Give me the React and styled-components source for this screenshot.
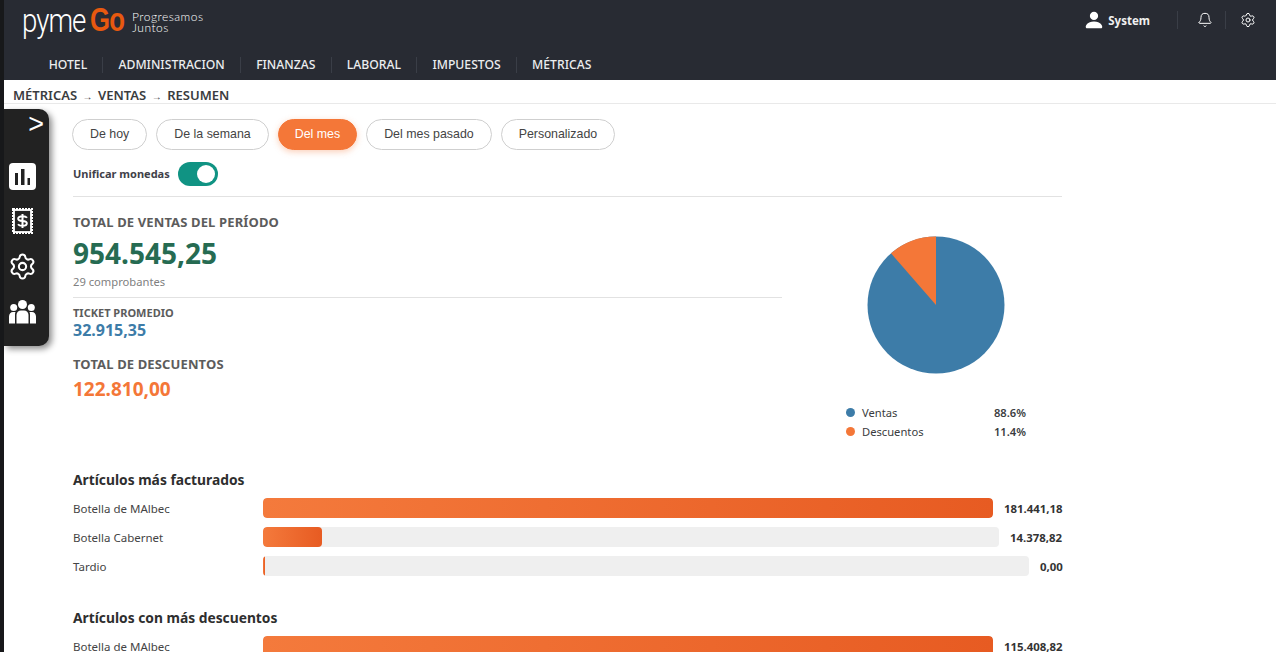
import React from "react";
import styled, { createGlobalStyle } from "styled-components";
import { Bell, Settings } from "lucide-react";
import { BsPersonFill } from "react-icons/bs";

const UI_FONT = `"Noto Sans", "Open Sans", sans-serif`;

const GlobalStyle = createGlobalStyle`
  html, body {
    margin: 0;
    padding: 0;
    height: 100%;
    overflow: hidden;
    background: #fff;
    font-family: ${UI_FONT};
  }
  * { box-sizing: border-box; }
`;

const Page = styled.div`
  position: relative;
  height: 652px;
  overflow: hidden;
  border-left: 4px solid #17181a;
`;

const Header = styled.header`
  height: 80px;
  background: #282b33;
  color: #fff;
`;

const TopRow = styled.div`
  height: 44px;
  display: flex;
  align-items: center;
  justify-content: space-between;
  padding: 0 7px 0 18px;
`;

const Logo = styled.div`
  display: flex;
  align-items: center;
  height: 44px;
  margin-top: -4px;
`;

const LogoPyme = styled.span`
  font-family: "Roboto", sans-serif;
  font-weight: 300;
  font-size: 33px;
  letter-spacing: -1.2px;
  transform: scaleX(0.84);
  transform-origin: left;
  width: 68px;
`;

const LogoGo = styled.span`
  font-family: "Liberation Sans", sans-serif;
  font-weight: 700;
  font-size: 33px;
  letter-spacing: -1px;
  color: #e8590f;
  transform: scaleX(0.78);
  transform-origin: left;
  width: 42px;
`;

const LogoSlogan = styled.div`
  font-family: "Lato", sans-serif;
  font-size: 12px;
  line-height: 11px;
  letter-spacing: 0.5px;
  font-weight: 300;
  margin-top: 3px;
`;

const UserArea = styled.div`
  display: flex;
  align-items: center;
  margin-top: -4px;
`;

const UserName = styled.span`
  font-size: 11.5px;
  font-weight: 700;
  margin: 0 27px 0 3px;
  color: #f0f0f0;
`;

const IconCell = styled.div`
  display: flex;
  align-items: center;
  justify-content: center;
  height: 18px;
  width: ${(p) => p.$w}px;
  padding-left: ${(p) => p.$pl || 0}px;
  border-left: 1px solid #3a3e47;
`;

const Nav = styled.nav`
  height: 36px;
  display: flex;
  align-items: center;
  padding: 6px 0 0 29.5px;
`;

const NavItem = styled.a`
  font-size: 12.2px;
  font-weight: 500;
  color: #eceef0;
  padding: 0 15.2px;
  line-height: 16px;
  white-space: nowrap;
  & + & {
    border-left: 1px solid #3a3e47;
  }
`;

const Breadcrumb = styled.div`
  height: 24px;
  padding: 8px 0 0 9px;
  font-size: 13px;
  font-weight: 600;
  line-height: 15px;
  color: #3a3c40;
  border-bottom: 1px solid #e9e9e9;
  white-space: nowrap;
`;

const Crumb = styled.span`
  font-weight: 400;
  font-size: 10px;
  margin: 0 5.5px;
`;

const Sidebar = styled.aside`
  position: absolute;
  left: 0;
  top: 109px;
  width: 45px;
  height: 237px;
  padding-right: 8px;
  background: #222222;
  border-radius: 0 10px 10px 0;
  box-shadow: 3px 3px 6px rgba(0, 0, 0, 0.45);
  display: flex;
  flex-direction: column;
  align-items: center;
  color: #fff;
`;

const Toggle = styled.div`
  align-self: flex-end;
  font-family: "Liberation Sans", sans-serif;
  font-size: 27px;
  line-height: 24px;
  height: 24px;
  margin: 3px -3px 0 0;
`;

const SideActive = styled.div`
  width: 27px;
  height: 27px;
  margin-top: 27px;
  border-radius: 4px;
  background: #fff;
  display: flex;
  align-items: center;
  justify-content: center;
`;

const SideIcon = styled.div`
  height: 26px;
  margin-top: ${(p) => p.$mt}px;
  display: flex;
  align-items: center;
  justify-content: center;
`;

const Content = styled.main`
  width: 989px;
  margin-left: 69px;
`;

const Pills = styled.div`
  display: flex;
  gap: 9px;
  padding-top: 15px;
  margin-left: -1px;
`;

const Pill = styled.button`
  height: 31px;
  padding: 0 ${(p) => (p.$active ? 16 : 17)}px 2px;
  border-radius: 16px;
  border: 1px solid ${(p) => (p.$active ? "#f47738" : "#cfcfcf")};
  background: ${(p) => (p.$active ? "#f47738" : "#fff")};
  color: ${(p) => (p.$active ? "#fff" : "#444")};
  font-family: "Liberation Sans", sans-serif;
  font-size: 12.4px;
  box-shadow: ${(p) => (p.$active ? "0 2px 6px rgba(244,119,56,0.35)" : "none")};
`;

const SwitchRow = styled.div`
  display: flex;
  align-items: center;
  gap: 8px;
  height: 24px;
  margin-top: 12px;
`;

const SwitchLabel = styled.label`
  font-size: 11px;
  font-weight: 700;
  color: #3f4149;
  margin-top: -2px;
`;

const Switch = styled.div`
  position: relative;
  width: 40px;
  height: 24px;
  border-radius: 12px;
  background: #109383;
  &::after {
    content: "";
    position: absolute;
    right: 3px;
    top: 3px;
    width: 18px;
    height: 18px;
    border-radius: 50%;
    background: #fff;
  }
`;

const Divider = styled.hr`
  border: 0;
  border-top: 1px solid #e2e2e2;
  margin: ${(p) => p.$m || 0};
`;

const Summary = styled.section`
  display: grid;
  grid-template-columns: 709px 1fr;
`;

const StatTitle = styled.div`
  font-size: 13px;
  letter-spacing: 0.13px;
  font-weight: 700;
  line-height: 16px;
  color: #5c5c5c;
  margin-top: ${(p) => p.$mt || 0}px;
`;

const BigValue = styled.div`
  font-size: 28px;
  font-weight: 700;
  line-height: 38px;
  color: #266b52;
  margin-top: 4px;
`;

const Note = styled.div`
  font-size: 11.2px;
  line-height: 16px;
  color: #808080;
  margin-top: 2px;
`;

const SmallTitle = styled.div`
  font-size: 11px;
  font-weight: 700;
  line-height: 14px;
  color: #5c5c5c;
`;

const MidValue = styled.div`
  font-size: ${(p) => p.$size}px;
  font-weight: 700;
  line-height: ${(p) => p.$lh}px;
  color: ${(p) => p.$color};
  margin-top: ${(p) => p.$mt || 0}px;
`;

const ChartCol = styled.div`
  display: flex;
  flex-direction: column;
  align-items: center;
  padding-top: 39px;
  padding-left: 28px;
`;

const Legend = styled.div`
  width: 180px;
  margin-top: 29px;
`;

const LegendRow = styled.div`
  display: flex;
  align-items: center;
  height: 19px;
  font-size: 11.2px;
  color: #3a3c40;
`;

const Dot = styled.span`
  width: 9px;
  height: 9px;
  border-radius: 50%;
  background: ${(p) => p.$color};
  margin-right: 7px;
`;

const LegendPct = styled.span`
  margin-left: auto;
  font-weight: 600;
`;

const SectionTitle = styled.h3`
  margin: ${(p) => p.$mt}px 0 9px;
  font-size: 13.8px;
  font-weight: 700;
  line-height: 18px;
  color: #2e2e2e;
`;

const BarRow = styled.div`
  display: flex;
  align-items: center;
  height: 20px;
  margin-bottom: 9px;
`;

const BarLabel = styled.div`
  width: 190px;
  flex: none;
  font-size: 11.5px;
  color: #444;
`;

const Track = styled.div`
  flex: 1;
  height: 20px;
  border-radius: 4px;
  background: #efefef;
  overflow: hidden;
`;

const Fill = styled.div`
  height: 100%;
  min-width: 2px;
  border-radius: 4px;
  background: linear-gradient(90deg, #f47a3c, #e75b22);
`;

const BarValue = styled.div`
  margin-left: 11px;
  width: ${(p) => p.$w}px;
  flex: none;
  text-align: right;
  font-size: 11.4px;
  font-weight: 700;
  color: #333;
`;

function ChartIcon() {
  return (
    <svg width="15" height="16" viewBox="0 0 15 16" fill="#222">
      <rect x="0" y="4" width="3" height="12" />
      <rect x="6" y="0" width="3.5" height="16" />
      <rect x="12.5" y="9" width="2.5" height="7" />
    </svg>
  );
}

function ReceiptIcon() {
  return (
    <svg width="21" height="26" viewBox="0 0 21 26">
      <rect x="1" y="1" width="19" height="24" fill="none" stroke="#fff" strokeWidth="2" strokeDasharray="2 1" />
      <rect x="2" y="2" width="17" height="22" fill="none" stroke="#fff" strokeWidth="1.8" />
      <rect x="4" y="4" width="13" height="18" fill="#222" />
      <path d="M15 9.8c-.7-1-2.200-1.600-4.500-1.600-2.400 0-4.300.9-4.300 2.500s1.900 2.100 4.300 2.300 4.300.7 4.300 2.300-1.900 2.500-4.300 2.500c-2.300 0-3.800-.6-4.500-1.600M10.500 6v14" fill="none" stroke="#fff" strokeWidth="2" />
    </svg>
  );
}

function TeamIcon() {
  return (
    <svg width="27" height="24" viewBox="0 0 27 24" fill="#fff">
      <circle cx="13.5" cy="4.5" r="4.5" />
      <circle cx="4.7" cy="7.5" r="3.5" />
      <circle cx="22.3" cy="7.5" r="3.5" />
      <path d="M7.5 23.5V15c0-2.500 2-4.500 4.500-4.500h3c2.500 0 4.500 2 4.500 4.500v8.500z" />
      <path d="M0 23.5v-7c0-2.500 1.800-4.500 4-4.500h2.500C6 13 6 14 6 15v8.500z" />
      <path d="M27 23.5v-7c0-2.500-1.800-4.500-4-4.500h-2.500c.5 1 .5 2 .5 3v8.500z" />
    </svg>
  );
}

function Pie() {
  return (
    <svg width="138" height="138" viewBox="0 0 138 138">
      <circle cx="69" cy="69" r="68.5" fill="#3d7ca8" />
      <path d="M69 69 L69 0.5 A68.5 68.5 0 0 0 24 17.3 Z" fill="#f47738" />
    </svg>
  );
}

const sold = [
  { name: "Botella de MAlbec", value: "181.441,18", pct: 100, w: 58 },
  { name: "Botella Cabernet", value: "14.378,82", pct: 8, w: 52 },
  { name: "Tardio", value: "0,00", pct: 0, w: 22 },
];

const discounted = [{ name: "Botella de MAlbec", value: "115.408,82", pct: 100, w: 58 }];

function Bars({ items }) {
  return items.map((item) => (
    <BarRow key={item.name}>
      <BarLabel>{item.name}</BarLabel>
      <Track>
        <Fill style={{ width: `${item.pct}%` }} />
      </Track>
      <BarValue $w={item.w}>{item.value}</BarValue>
    </BarRow>
  ));
}

export default function App() {
  return (
    <Page>
      <GlobalStyle />
      <Header>
        <TopRow>
          <Logo>
            <LogoPyme>pyme</LogoPyme>
            <LogoGo>Go</LogoGo>
            <LogoSlogan>
              Progresamos
              <br />
              Juntos
            </LogoSlogan>
          </Logo>
          <UserArea>
            <BsPersonFill size={22} color="#fff" />
            <UserName>System</UserName>
            <IconCell $w={48} $pl={6}>
              <Bell size={16} color="#fff" strokeWidth={1.5} />
            </IconCell>
            <IconCell $w={44}>
              <Settings size={16} color="#fff" strokeWidth={1.5} />
            </IconCell>
          </UserArea>
        </TopRow>
        <Nav>
          <NavItem>HOTEL</NavItem>
          <NavItem>ADMINISTRACION</NavItem>
          <NavItem>FINANZAS</NavItem>
          <NavItem>LABORAL</NavItem>
          <NavItem>IMPUESTOS</NavItem>
          <NavItem>MÉTRICAS</NavItem>
        </Nav>
      </Header>
      <Breadcrumb>
        MÉTRICAS<Crumb>→</Crumb>VENTAS<Crumb>→</Crumb>RESUMEN
      </Breadcrumb>
      <Sidebar>
        <Toggle>&gt;</Toggle>
        <SideActive>
          <ChartIcon />
        </SideActive>
        <SideIcon $mt={18}>
          <ReceiptIcon />
        </SideIcon>
        <SideIcon $mt={19}>
          <Settings size={29} color="#fff" strokeWidth={1.7} />
        </SideIcon>
        <SideIcon $mt={20}>
          <TeamIcon />
        </SideIcon>
      </Sidebar>
      <Content>
        <Pills>
          <Pill>De hoy</Pill>
          <Pill>De la semana</Pill>
          <Pill $active>Del mes</Pill>
          <Pill>Del mes pasado</Pill>
          <Pill>Personalizado</Pill>
        </Pills>
        <SwitchRow>
          <SwitchLabel>Unificar monedas</SwitchLabel>
          <Switch />
        </SwitchRow>
        <Divider $m="10px 0 0" />
        <Summary>
          <div>
            <StatTitle $mt={17}>TOTAL DE VENTAS DEL PERÍODO</StatTitle>
            <BigValue>954.545,25</BigValue>
            <Note>29 comprobantes</Note>
            <Divider $m="7px 0 8px" />
            <SmallTitle>TICKET PROMEDIO</SmallTitle>
            <MidValue $size={16} $lh={20} $color="#3d7ca8">32.915,35</MidValue>
            <StatTitle $mt={16}>TOTAL DE DESCUENTOS</StatTitle>
            <MidValue $size={19} $lh={26} $color="#f47738" $mt={4}>122.810,00</MidValue>
          </div>
          <ChartCol>
            <Pie />
            <Legend>
              <LegendRow>
                <Dot $color="#3d7ca8" />
                Ventas
                <LegendPct>88.6%</LegendPct>
              </LegendRow>
              <LegendRow>
                <Dot $color="#f47738" />
                Descuentos
                <LegendPct>11.4%</LegendPct>
              </LegendRow>
            </Legend>
          </ChartCol>
        </Summary>
        <SectionTitle $mt={30}>Artículos más facturados</SectionTitle>
        <Bars items={sold} />
        <SectionTitle $mt={33}>Artículos con más descuentos</SectionTitle>
        <Bars items={discounted} />
      </Content>
    </Page>
  );
}
